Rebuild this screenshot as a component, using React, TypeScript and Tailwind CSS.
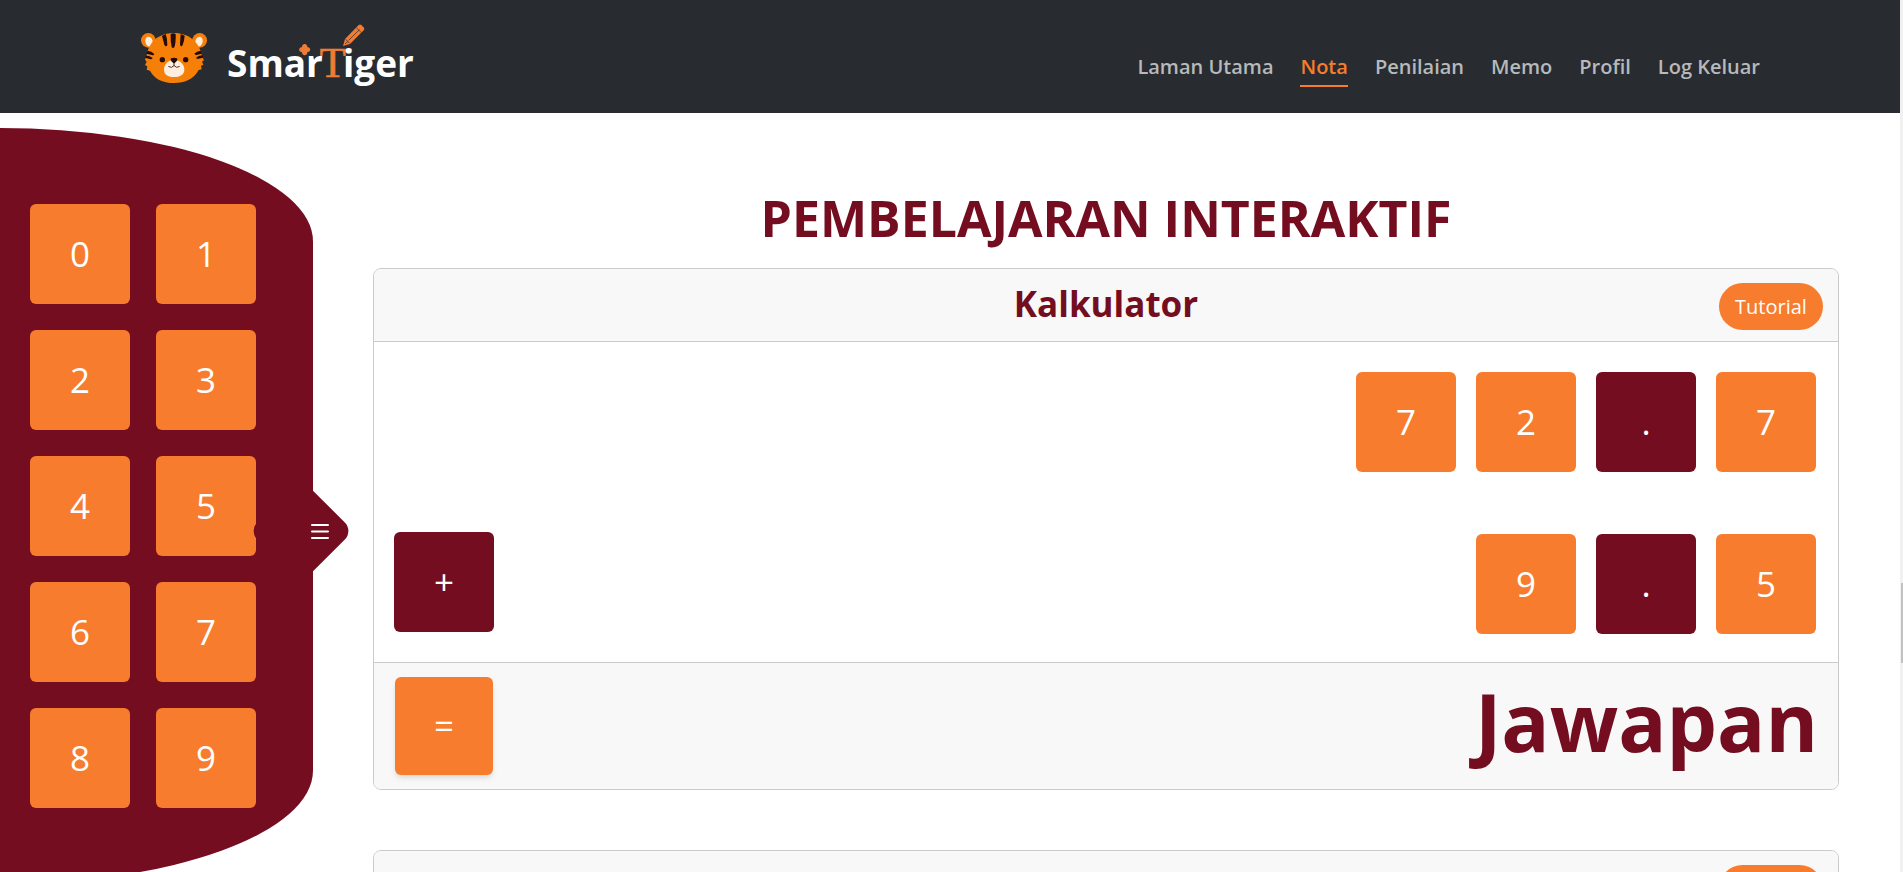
import React from "react";

const navLinks = ["Laman Utama", "Nota", "Penilaian", "Memo", "Profil", "Log Keluar"];
const digits = ["0", "1", "2", "3", "4", "5", "6", "7", "8", "9"];
const operands = [
  ["7", "2", ".", "7"],
  ["9", ".", "5"],
];

function Logo() {
  return (
    <svg viewBox="60 72 825 195" className="h-[65px] w-[275px]" role="img" aria-label="SmarTiger">
      {/* ears */}
      <circle cx="85" cy="121" r="22" fill="#f67f08" />
      <circle cx="239" cy="121" r="22" fill="#f67f08" />
      <ellipse cx="87" cy="125" rx="11" ry="15" fill="#fdeee0" transform="rotate(-15 87 125)" />
      <ellipse cx="237" cy="125" rx="11" ry="15" fill="#fdeee0" transform="rotate(15 237 125)" />
      {/* head */}
      <path
        d="M162 99C206 99 240 126 246 170L252 181L246 185L250 194L243 197L245 208L236 210C222 236 196 249 162 249C128 249 102 236 90 212L80 209L82 199L75 195L80 185L75 179L80 168C86 124 118 99 162 99Z"
        fill="#f67f08"
      />
      {/* stripes */}
      <g fill="#270b08">
        <path d="M152 102Q159 97 167 102Q168 128 163 142Q158 147 155 141Q151 124 152 102Z" />
        <path d="M126 108L137 102Q143 118 142 136Q137 143 133 134Z" />
        <path d="M182 102L194 107Q193 124 187 137Q181 143 180 132Z" />
        <path d="M83 152Q95 153 103 162Q101 168 95 165L79 161Z" />
        <path d="M78 167Q90 167 98 174Q95 179 89 177L76 173Z" />
        <path d="M242 152Q230 154 223 161Q227 167 232 164L245 161Z" />
        <path d="M246 166Q235 167 228 173Q231 178 236 176L249 173Z" />
        <circle cx="127" cy="179" r="8" />
        <circle cx="197" cy="179" r="8" />
      </g>
      <path d="M162 180C181 180 193 194 193 209C193 224 180 231 162 231C144 231 132 224 132 209C132 194 143 180 162 180Z" fill="#fdeee0" />
      <path d="M153 175Q162 171 171 175Q175 181 165 188Q162 191 159 188Q149 181 153 175Z" fill="#270b08" />
      <path d="M162 188V197Q155 206 146 200M162 197Q169 206 178 200" fill="none" stroke="#270b08" strokeWidth="2.5" strokeLinecap="round" />
      {/* wordmark */}
      <text x="321" y="230" fill="#ffffff" className="font-['Open_Sans',sans-serif] text-[111px] font-bold">Smar</text>
      <text x="599" y="232" fill="#ee7c35" stroke="#ee7c35" strokeWidth="2" className="font-['Liberation_Serif',serif] text-[128px]">T</text>
      <text x="669" y="230" fill="#ffffff" className="font-['Open_Sans',sans-serif] text-[111px] font-bold">iger</text>
      {/* plus mark */}
      <path
        d="M546 141Q546 133 554 132Q562 133 562 141Q570 142 571 149Q570 156 562 157Q562 165 554 166Q546 165 546 157Q538 156 537 149Q538 142 546 141Z"
        fill="#ee7c35"
      />
      {/* pencil */}
      <path d="M669 138L675 117L716 75Q720 72 724 75L732 83Q735 87 731 91L690 132Z" fill="#ee7c35" />
      <path d="M677 118L689 130M686 121L718 89M709 83L724 98M675 132L684 124" fill="none" stroke="#533529" strokeWidth="2.5" />
    </svg>
  );
}

function Tile({ label, dark = false }: { label: string; dark?: boolean }) {
  return (
    <button
      type="button"
      className={`flex size-[100px] items-center justify-center rounded-md text-[35px] text-white ${dark ? "bg-[#740d20]" : "bg-[#f77c2d]"}`}
    >
      {label}
    </button>
  );
}

function CardHeader({ title, action }: { title?: string; action?: string }) {
  return (
    <div className="grid h-[73px] grid-cols-[1fr_auto_1fr] items-start border-b border-[#cbcbcb] bg-[#f8f8f8] px-[15px] pt-[14px]">
      {title && <h2 className="col-start-2 text-[35px] leading-[42px] font-bold text-[#740d20]">{title}</h2>}
      <button
        type="button"
        aria-label="Tutorial"
        className="col-start-3 h-[47px] min-w-[104px] justify-self-end rounded-full bg-[#f77c2d] px-4 text-[20px] text-white"
      >
        {action}
      </button>
    </div>
  );
}

export default function App() {
  return (
    <div className="flex h-screen flex-col overflow-hidden bg-white font-['Open_Sans','Noto_Sans',sans-serif]">
      <div className="flex min-h-0 flex-1">
        <div className="flex min-w-0 flex-1 flex-col overflow-hidden">
          <header className="flex h-[113px] shrink-0 items-center justify-between bg-[#282c30] px-[140px]">
            <a href="#utama">
              <Logo />
            </a>
            <nav className="flex gap-[27px] pt-[25px]">
              {navLinks.map((link) => (
                <a
                  key={link}
                  href="#nota"
                  className={`border-b-2 pb-[3px] text-[20px] leading-[30px] font-semibold ${link === "Nota" ? "border-[#f77c2d] text-[#f77c2d]" : "border-transparent text-[#b7b9ba]"}`}
                >
                  {link}
                </a>
              ))}
            </nav>
          </header>

          <div className="flex min-h-0 flex-1 items-start">
            <aside className="relative mt-[15px] w-[313px] shrink-0 rounded-[0_100%_100%_0/0_15%_15%_0] bg-[#740d20] px-[30px] py-[76px]">
              <div className="grid w-fit grid-cols-2 gap-[26px]">
                {digits.map((digit) => (
                  <Tile key={digit} label={digit} />
                ))}
              </div>
              <button type="button" aria-label="Menu" className="absolute top-[366px] left-[264px] size-[74px]">
                <span className="absolute inset-0 rotate-45 rounded-[12px] bg-[#740d20]" />
                <svg viewBox="0 0 18 16" className="absolute top-[29px] left-[47px] h-4 w-[18px]" fill="none" stroke="#ffffff" strokeWidth="2" strokeLinecap="round">
                  <path d="M1 2H17M1 8.5H17M1 15H17" />
                </svg>
              </button>
            </aside>

            <main className="min-w-0 flex-1 pt-[75px] pr-[61px] pl-[60px]">
              <h1 className="text-center text-[50px] leading-[60px] font-bold text-[#740d20]">PEMBELAJARAN INTERAKTIF</h1>

              <section className="mt-5 overflow-hidden rounded-lg border border-[#cbcbcb]">
                <CardHeader title="Kalkulator" action="Tutorial" />
                <div className="flex justify-between pt-[30px] pr-[22px] pl-[20px]">
                  <div className="self-end pb-[30px]">
                    <Tile label="+" dark />
                  </div>
                  <div className="flex flex-col items-end gap-[62px] pb-[28px]">
                    {operands.map((row, i) => (
                      <div key={i} className="flex gap-5">
                        {row.map((cell, j) => (
                          <Tile key={j} label={cell} dark={cell === "."} />
                        ))}
                      </div>
                    ))}
                  </div>
                </div>
                <div className="flex items-start justify-between border-t border-[#cbcbcb] bg-[#f8f8f8] pt-[14px] pr-[20px] pb-[14px] pl-[21px]">
                  <button type="button" className="size-[98px] rounded-md bg-[#f77c2d] text-[35px] text-white shadow-md">
                    =
                  </button>
                  <output className="text-[80px] leading-[88px] font-bold text-[#740d20]">Jawapan</output>
                </div>
              </section>

              <section className="mt-[60px] overflow-hidden rounded-lg border border-[#cbcbcb]">
                <CardHeader />
              </section>
            </main>
          </div>
        </div>

        <div className="flex w-[3px] flex-col items-end bg-[#f1f1f1] pt-[583px]">
          <div className="h-[80px] w-[2px] bg-[#c1c1c1]" />
        </div>
      </div>
    </div>
  );
}
